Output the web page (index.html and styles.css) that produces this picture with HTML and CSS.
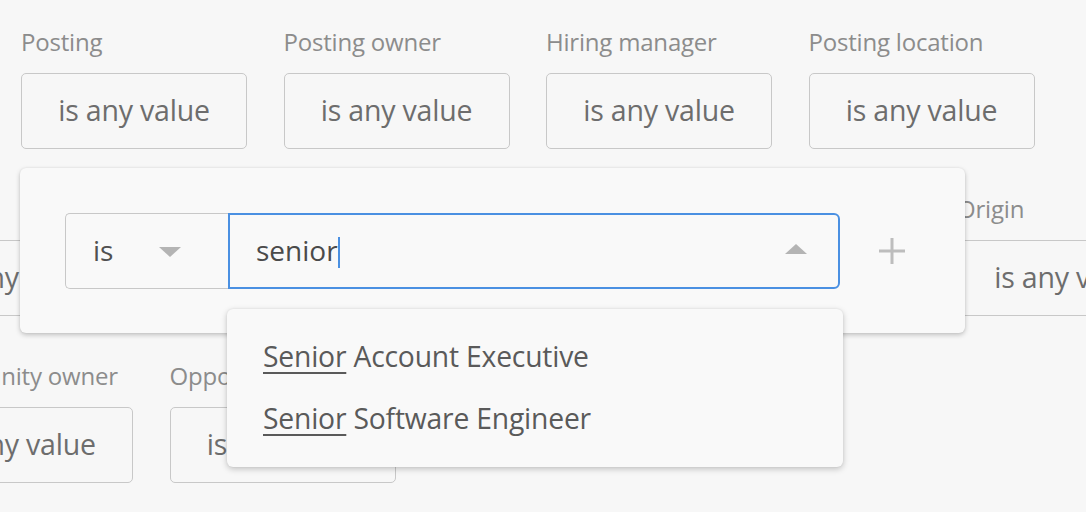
FILE: index.html
```html
<!DOCTYPE html>
<html lang="en">
<head>
<meta charset="utf-8">
<title>Filters</title>
<link rel="stylesheet" href="styles.css">
</head>
<body>
<main class="filters">
  <div class="row row-top">
    <div class="field"><div class="label">Posting</div><div class="value">is any value</div></div>
    <div class="field"><div class="label">Posting owner</div><div class="value">is any value</div></div>
    <div class="field"><div class="label">Hiring manager</div><div class="value">is any value</div></div>
    <div class="field"><div class="label">Posting location</div><div class="value">is any value</div></div>
  </div>
  <div class="row row-shift">
    <div class="field"><div class="label">Tags</div><div class="value">is any value</div></div>
    <div class="field"><div class="label">Source</div><div class="value">is any value</div></div>
    <div class="field"><div class="label">Stage</div><div class="value">is any value</div></div>
    <div class="field"><div class="label">Archive reason</div><div class="value">is any value</div></div>
    <div class="field"><div class="label">Origin</div><div class="value">is any value</div></div>
  </div>
  <div class="row row-shift">
    <div class="field"><div class="label">Opportunity owner</div><div class="value">is any value</div></div>
    <div class="field"><div class="label">Opportunity stage</div><div class="value">is any value</div></div>
  </div>
</main>

<div class="editor">
  <div class="editor-row">
    <div class="op-select">
      <span>is</span>
      <svg class="tri" width="22" height="10" viewBox="0 0 22 10"><path d="M0 0H22L11 10Z" fill="#b4b4b4"/></svg>
    </div>
    <div class="search">
      <span class="search-text">senior</span><span class="caret"></span>
      <svg class="tri tri-up" width="22" height="10" viewBox="0 0 22 10"><path d="M0 10H22L11 0Z" fill="#b4b4b4"/></svg>
    </div>
    <svg class="plus" width="26" height="26" viewBox="0 0 26 26"><path d="M13 0V26M0 13H26" stroke="#bdbdbd" stroke-width="3"/></svg>
  </div>
</div>

<ul class="suggest">
  <li><u>Senior</u> Account Executive</li>
  <li><u>Senior</u> Software Engineer</li>
</ul>
</body>
</html>
```

FILE: styles.css
```css
html, body {
  margin: 0;
  padding: 0;
}
body {
  width: 1086px;
  height: 512px;
  overflow: hidden;
  position: relative;
  background: #f7f7f7;
  font-family: "Open Sans", "Liberation Sans", sans-serif;
}
.filters {
  padding-top: 29px;
}
.row {
  display: flex;
  gap: 36.5px;
  height: 167px;
  white-space: nowrap;
}
.row-top { margin-left: 21px; }
.row-shift { margin-left: -93px; }
.field {
  flex: 0 0 226px;
  display: flex;
  flex-direction: column;
}
.label {
  font-size: 24px;
  line-height: 26px;
  color: #8c8c8c;
  margin-bottom: 18px;
  letter-spacing: -0.2px;
}
.value {
  box-sizing: border-box;
  height: 76px;
  border: 1.5px solid #c8c8c8;
  border-radius: 5px;
  display: flex;
  align-items: center;
  justify-content: center;
  padding-bottom: 3px;
  font-size: 28.5px;
  color: #6d6d6d;
  letter-spacing: -0.2px;
}

.editor {
  position: absolute;
  left: 20px;
  top: 168px;
  width: 945px;
  height: 165px;
  box-sizing: border-box;
  background: #f9f9f9;
  border-radius: 6px;
  box-shadow: 0 2px 5px rgba(0,0,0,0.22), 0 0 2px rgba(0,0,0,0.08);
  padding: 45px 0 0 45px;
}
.editor-row {
  display: flex;
  align-items: center;
}
.op-select {
  box-sizing: border-box;
  width: 163px;
  height: 76px;
  border: 1.5px solid #c8c8c8;
  border-right: none;
  border-radius: 5px 0 0 5px;
  display: flex;
  align-items: center;
  padding-left: 27px;
  padding-bottom: 2px;
  font-size: 28px;
  color: #505050;
}
.op-select .tri { margin-left: 46px; margin-top: 4px; }
.search {
  box-sizing: border-box;
  width: 612px;
  height: 76px;
  border: 2.5px solid #4a90e2;
  border-radius: 0 6px 6px 0;
  display: flex;
  align-items: center;
  padding-left: 26px;
  padding-bottom: 2px;
  font-size: 28px;
  color: #4a4a4a;
}
.caret {
  width: 2px;
  height: 31px;
  background: #4a90e2;
  margin-top: 4px;
}
.tri-up { margin-left: auto; margin-right: 31px; margin-top: -2px; }
.plus { margin-left: 39px; }

.suggest {
  position: absolute;
  left: 227px;
  top: 309px;
  width: 616px;
  height: 158px;
  box-sizing: border-box;
  margin: 0;
  padding: 16px 0 0 36px;
  list-style: none;
  background: #f9f9f9;
  border-radius: 6px;
  box-shadow: 0 2px 6px rgba(0,0,0,0.22), 0 0 2px rgba(0,0,0,0.08);
}
.suggest li {
  height: 62px;
  line-height: 62px;
  font-size: 28.3px;
  color: #5a5a5a;
  letter-spacing: -0.2px;
}
.suggest u {
  text-decoration-thickness: 2px;
  text-underline-offset: 5px;
}
```
